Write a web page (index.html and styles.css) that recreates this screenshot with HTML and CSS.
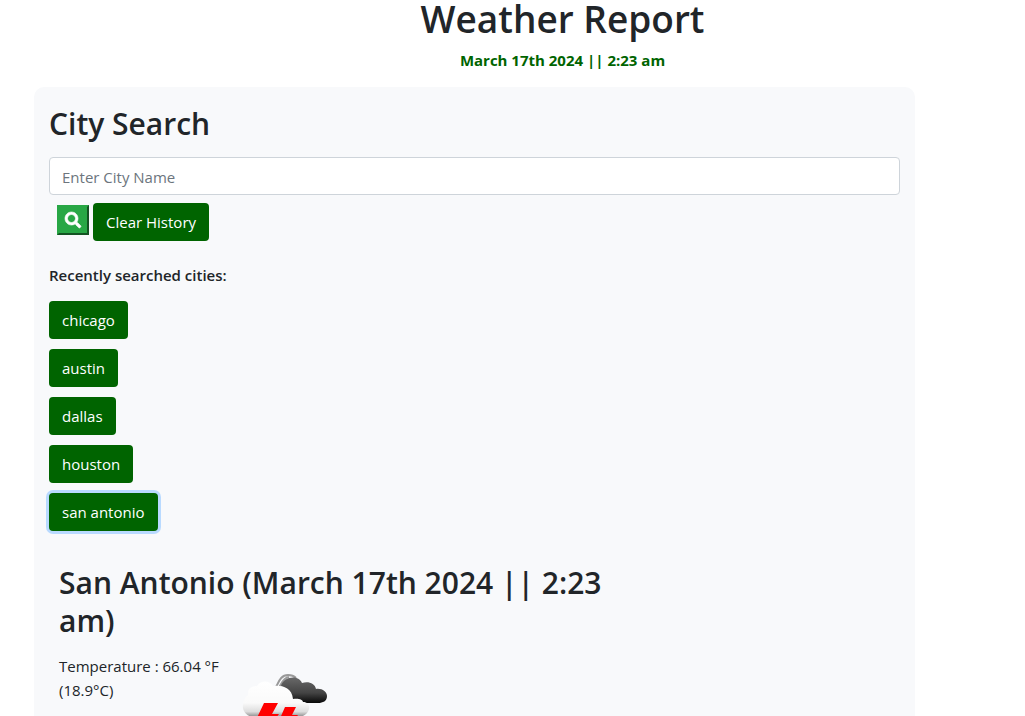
FILE: index.html
```html
<!DOCTYPE html>
<html lang="en">
<head>
<meta charset="utf-8">
<meta name="viewport" content="width=device-width, initial-scale=1">
<title>Weather Report</title>
<link rel="stylesheet" href="styles.css">
</head>
<body>
<header class="masthead">
  <h1 class="title">Weather Report</h1>
  <p class="date">March 17th 2024 || 2:23 am</p>
</header>
<main class="panel">
  <form class="search">
    <h2 class="heading"><label for="city">City Search</label></h2>
    <input class="city-input" id="city" type="text" placeholder="Enter City Name">
    <div class="actions">
      <button class="search-btn" type="button" aria-label="Search">
        <svg class="search-icon" viewBox="0 0 512 512" aria-hidden="true"><path fill="currentColor" stroke="currentColor" stroke-width="20" d="M505 442.700 405.300 343c-4.500-4.500-10.600-7-17-7H372c27.600-35.300 44-79.700 44-128C416 93.100 322.900 0 208 0S0 93.100 0 208s93.100 208 208 208c48.300 0 92.700-16.400 128-44v16.300c0 6.400 2.500 12.500 7 17l99.700 99.700c9.400 9.400 24.600 9.400 33.900 0l28.300-28.300c9.400-9.400 9.400-24.600.1-34zM208 336c-70.700 0-128-57.200-128-128 0-70.700 57.200-128 128-128 70.700 0 128 57.200 128 128 0 70.700-57.200 128-128 128z"/></svg>
      </button>
      <button class="btn" type="button">Clear History</button>
    </div>
  </form>
  <section class="history">
    <h3 class="history-title">Recently searched cities:</h3>
    <ul class="cities">
      <li><button class="btn" type="button">chicago</button></li>
      <li><button class="btn" type="button">austin</button></li>
      <li><button class="btn" type="button">dallas</button></li>
      <li><button class="btn" type="button">houston</button></li>
      <li><button class="btn btn-active" type="button">san antonio</button></li>
    </ul>
  </section>
  <section class="weather">
    <h2 class="heading">San Antonio (March 17th 2024 || 2:23 am)</h2>
    <div class="conditions">
      <p class="reading">Temperature : 66.04 °F (18.9°C)</p>
      <svg class="weather-icon" viewBox="0 0 100 100" role="img" aria-label="Thunderstorm">
        <defs>
          <linearGradient id="dark" x1="0" y1="0" x2="0" y2="1"><stop offset="0" stop-color="#686868"/><stop offset=".6" stop-color="#444"/><stop offset="1" stop-color="#080808"/></linearGradient>
          <linearGradient id="light" x1="0" y1="0" x2="0" y2="1"><stop offset="0" stop-color="#fff"/><stop offset=".6" stop-color="#fafafa"/><stop offset=".85" stop-color="#ddd"/><stop offset="1" stop-color="#888"/></linearGradient>
        </defs>
        <path fill="none" stroke="#999" stroke-width="2" d="M40 38C43 36 44 25 53 25c4 0 6 1 8 3M43 39c3-3 4-11 11-12"/>
        <path fill="url(#dark)" d="M46 36c2-9 17-12 21-3 6-2 13 0 14 6 6-1 11 3 11 7 0 5-4 7-9 7H64L54 48Z"/>
        <path fill="url(#light)" d="M13 45c-1-7 5-9 9-9 3-6 13-6 16 0 8-1 19 1 20 13 6-1 10 1 10 3 5 0 7 4 6 7-1 5-6 8-11 8H19C12 67 7 61 8 55c0-4 2-8 5-10Z"/>
        <path fill="#f00" d="M29 53h14l-6 11h7L25 90l-4-18h-1Zm21 4h11l-4 8h6L44 90l4-17h-5Z"/>
      </svg>
    </div>
  </section>
</main>
</body>
</html>
```
FILE: styles.css
```css
*, *::before, *::after { box-sizing: border-box; }

body {
  margin: 0;
  height: 100vh;
  overflow: hidden;
  display: flex;
  flex-direction: column;
  background: #fff;
  color: #212529;
  font-family: "Segoe UI", "Open Sans", "Noto Sans", sans-serif;
  font-size: 15px;
  line-height: 24px;
}

h1, h2, h3, p, ul { margin: 0; padding: 0; }

.masthead {
  flex: none;
  margin-left: 100px;
  text-align: center;
}

.title {
  font-size: 37px;
  line-height: 38px;
  font-weight: 600;
}

.date {
  margin: 10px 0 15px;
  color: #006400;
  font-weight: 700;
}

.panel {
  flex: 1 0 auto;
  margin: 0 110px 0 34px;
  padding: 18px 15px;
  border-radius: 10px;
  background: #f8f9fb;
}

.heading {
  font-size: 30px;
  line-height: 38px;
  font-weight: 600;
}

.city-input {
  display: block;
  width: 100%;
  height: 38px;
  margin: 14px 0 8px;
  padding: 7px 12px 5px;
  border: 1px solid #ced4da;
  border-radius: 4px;
  background: #fff;
  color: #495057;
  font: inherit;
}

.city-input::placeholder { color: #6c757d; opacity: 1; }

.actions {
  display: flex;
  gap: 4px;
  padding-left: 8px;
}

.search-btn {
  display: flex;
  align-items: center;
  justify-content: center;
  width: 32px;
  height: 30px;
  margin-top: 2px;
  padding: 0;
  border: 2px outset #28a745;
  background: #28a745;
  color: #fff;
}

.search-icon { width: 16px; height: 16px; overflow: visible; }

.btn {
  height: 38px;
  padding: 6px 13px;
  border: 0;
  border-radius: 4px;
  background: #006400;
  color: #fff;
  font: inherit;
}

.btn-active { box-shadow: 0 0 0 3px #b9daff; }

.history { margin-top: 22px; }

.history-title {
  font-size: 15px;
  line-height: 24px;
  font-weight: 600;
}

.cities {
  display: flex;
  flex-direction: column;
  align-items: flex-start;
  gap: 10px;
  margin-top: 14px;
  list-style: none;
}

.cities li { display: flex; }

.weather {
  max-width: 580px;
  margin-top: 33px;
  padding: 0 10px;
}

.conditions {
  display: flex;
  align-items: flex-start;
  gap: 16px;
  margin-top: 10px;
}

.reading {
  width: 160px;
  padding-top: 4px;
}

.weather-icon { width: 100px; height: 100px; }
```
